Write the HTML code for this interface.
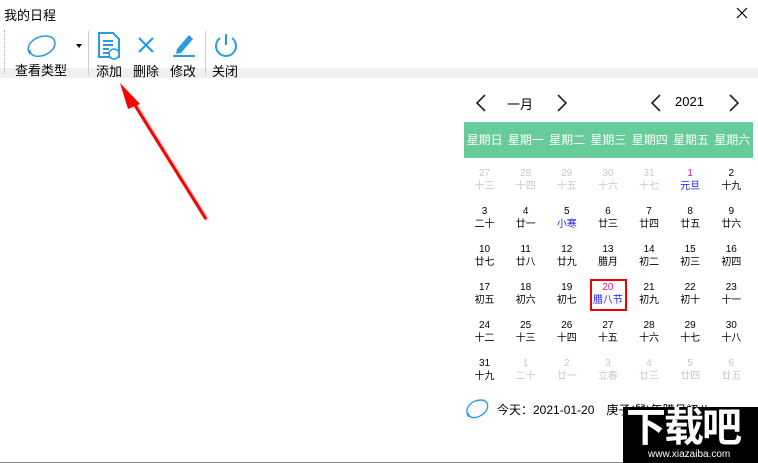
<!DOCTYPE html>
<html><head><meta charset="utf-8"><style>
*{margin:0;padding:0;box-sizing:border-box}
body{width:758px;height:463px;overflow:hidden;background:#fff;position:relative;font-family:"Liberation Sans","Noto Sans CJK SC",sans-serif;color:#000}
.a{position:absolute}
.tb{font-size:13px}
.g{position:absolute;left:464px;width:288px}
.r{display:flex;height:38px;position:absolute;left:0;width:288px}
.c{width:41.14px;text-align:center;font-size:10px;line-height:13px;padding-top:1px}
.c b{display:block;font-weight:normal}
.gr{color:#c8c8c8}
.bl{color:#1a1aff}
.wk{position:absolute;left:464px;top:122px;width:289px;height:36px;background:#66cc99;display:flex;color:#fff;font-size:12px;line-height:36px}
.wk div{width:41.28px;text-align:center;white-space:nowrap}
</style></head><body>
<div class="a tb" style="left:4px;top:5px;font-size:13px">我的日程</div>
<svg class="a" style="left:736px;top:7px" width="12" height="12"><path d="M1 1L11 11M11 1L1 11" stroke="#000" stroke-width="1.2"/></svg>
<div class="a" style="left:0;top:68px;width:758px;height:10px;background:#f0f0f0"></div>
<div class="a" style="left:4px;top:30px;height:44px;border-left:1px dotted #aaa"></div>
<svg class="a" style="left:24px;top:32px" width="36" height="28"><path d="M6 22 C0 14 10 4 22 4 C32 4 34 14 26 20 C18 26 6 26 6 18" fill="none" stroke="#2a9be0" stroke-width="1.5"/></svg>
<div class="a" style="left:76px;top:44px;border:3px solid transparent;border-top:4px solid #000"></div>
<div class="a tb" style="left:15px;top:60px">查看类型</div>
<div class="a" style="left:88px;top:31px;width:1px;height:44px;background:#ccc"></div>
<svg class="a" style="left:95px;top:31px" width="28" height="30"><path d="M4 2h14l6 6v18h-20z" fill="#fff" stroke="#2a9be0" stroke-width="2"/><path d="M8 10h10M8 14h10M8 18h6M8 22h6" stroke="#2a9be0" stroke-width="2"/><circle cx="19" cy="23" r="5" fill="#fff" stroke="#2a9be0" stroke-width="1.5"/></svg>
<div class="a tb" style="left:96px;top:61px">添加</div>
<svg class="a" style="left:136px;top:35px" width="20" height="20"><path d="M3 3L17 17M17 3L3 17" stroke="#2a9be0" stroke-width="2.2"/></svg>
<div class="a tb" style="left:133px;top:61px">删除</div>
<svg class="a" style="left:171px;top:31px" width="26" height="26"><path d="M6 18L18 4l4 4L10 22l-5 1z" fill="#2a9be0"/><path d="M2 25h22" stroke="#2a9be0" stroke-width="2"/></svg>
<div class="a tb" style="left:170px;top:61px">修改</div>
<div class="a" style="left:205px;top:31px;width:1px;height:44px;background:#ccc"></div>
<svg class="a" style="left:213px;top:32px" width="26" height="26"><path d="M7 6A10 10 0 1 0 19 6" fill="none" stroke="#2a9be0" stroke-width="2"/><path d="M13 2v11" stroke="#2a9be0" stroke-width="2"/></svg>
<div class="a tb" style="left:212px;top:61px">关闭</div>
<svg class="a" style="left:100px;top:76px" width="120" height="150"><path d="M107 144L30 20" stroke="#999" stroke-width="5" opacity=".4"/><path d="M106 143L28 18" stroke="#f00" stroke-width="3"/><path d="M20 7L40 28 28 33z" fill="#f00"/></svg>
<svg class="a" style="left:474px;top:93px" width="14" height="20"><path d="M11 2L3 10l8 8" fill="none" stroke="#222" stroke-width="1.6"/></svg>
<div class="a" style="left:507px;top:94px;font-size:13px">一月</div>
<svg class="a" style="left:555px;top:93px" width="14" height="20"><path d="M3 2l8 8-8 8" fill="none" stroke="#222" stroke-width="1.6"/></svg>
<svg class="a" style="left:649px;top:93px" width="14" height="20"><path d="M11 2L3 10l8 8" fill="none" stroke="#222" stroke-width="1.6"/></svg>
<div class="a" style="left:675px;top:94px;font-size:13px">2021</div>
<svg class="a" style="left:727px;top:93px" width="14" height="20"><path d="M3 2l8 8-8 8" fill="none" stroke="#222" stroke-width="1.6"/></svg>
<div class="wk"><div>星期日</div><div>星期一</div><div>星期二</div><div>星期三</div><div>星期四</div><div>星期五</div><div>星期六</div></div>
<div class="g" style="top:166px">
<div class="r" style="top:0"><div class="c gr"><b>27</b>十三</div><div class="c gr"><b>28</b>十四</div><div class="c gr"><b>29</b>十五</div><div class="c gr"><b>30</b>十六</div><div class="c gr"><b>31</b>十七</div><div class="c"><b style="color:#d0208a">1</b><span class="bl">元旦</span></div><div class="c"><b>2</b>十九</div></div>
<div class="r" style="top:38px"><div class="c"><b>3</b>二十</div><div class="c"><b>4</b>廿一</div><div class="c"><b>5</b><span class="bl">小寒</span></div><div class="c"><b>6</b>廿三</div><div class="c"><b>7</b>廿四</div><div class="c"><b>8</b>廿五</div><div class="c"><b>9</b>廿六</div></div>
<div class="r" style="top:76px"><div class="c"><b>10</b>廿七</div><div class="c"><b>11</b>廿八</div><div class="c"><b>12</b>廿九</div><div class="c"><b>13</b>腊月</div><div class="c"><b>14</b>初二</div><div class="c"><b>15</b>初三</div><div class="c"><b>16</b>初四</div></div>
<div class="r" style="top:114px"><div class="c"><b>17</b>初五</div><div class="c"><b>18</b>初六</div><div class="c"><b>19</b>初七</div><div class="c"><b style="color:#d0208a">20</b><span class="bl">腊八节</span></div><div class="c"><b>21</b>初九</div><div class="c"><b>22</b>初十</div><div class="c"><b>23</b>十一</div></div>
<div class="r" style="top:152px"><div class="c"><b>24</b>十二</div><div class="c"><b>25</b>十三</div><div class="c"><b>26</b>十四</div><div class="c"><b>27</b>十五</div><div class="c"><b>28</b>十六</div><div class="c"><b>29</b>十七</div><div class="c"><b>30</b>十八</div></div>
<div class="r" style="top:190px"><div class="c"><b>31</b>十九</div><div class="c gr"><b>1</b>二十</div><div class="c gr"><b>2</b>廿一</div><div class="c gr"><b>3</b>立春</div><div class="c gr"><b>4</b>廿三</div><div class="c gr"><b>5</b>廿四</div><div class="c gr"><b>6</b>廿五</div></div>
</div>
<div class="a" style="left:590px;top:279px;width:37px;height:32px;border:2px solid #e00"></div>
<svg class="a" style="left:463px;top:397px" width="28" height="24"><path d="M6 20C0 12 8 3 18 3C26 3 27 12 20 17C14 22 6 22 5 16" fill="none" stroke="#2a9be0" stroke-width="1.4"/></svg>
<div class="a" style="left:497px;top:401px;font-size:12px">今天：2021-01-20　庚子(鼠)年腊月初八</div>
<div class="a" style="left:623px;top:407px;width:135px;height:56px;background:#000;color:#fff;overflow:hidden">
<div style="font-size:40px;font-weight:bold;line-height:42px;padding-left:3px;letter-spacing:-2px">下载吧</div>
<div style="font-size:10px;padding-left:25px;line-height:12px">www.xiazaiba.com</div></div>
<div class="a" style="left:0;top:462px;width:623px;height:1px;background:#888"></div>
</body></html>
